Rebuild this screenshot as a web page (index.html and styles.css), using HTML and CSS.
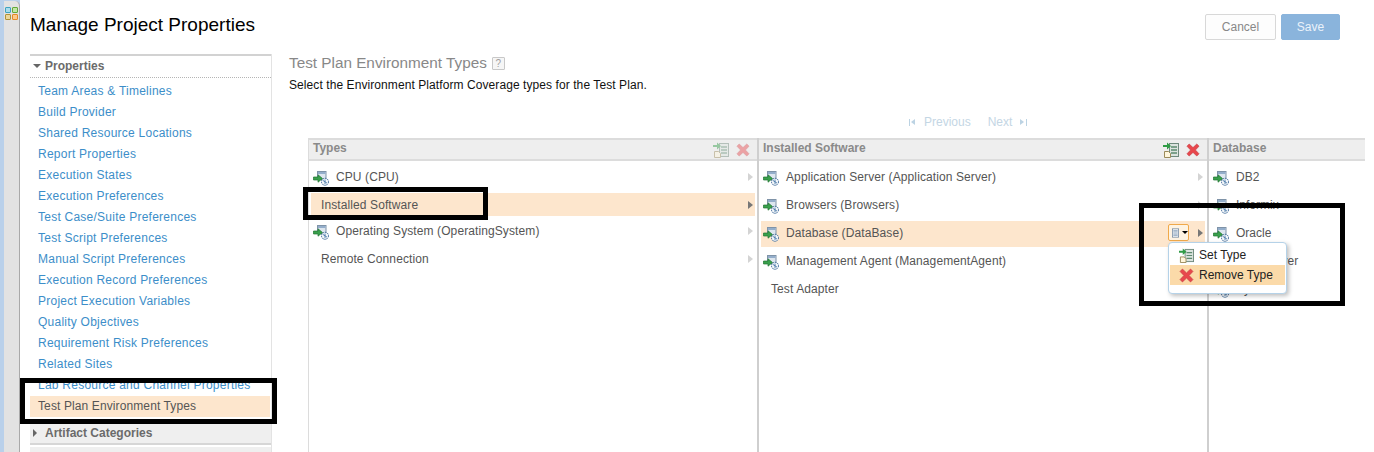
FILE: index.html
```html
<!DOCTYPE html>
<html lang="en">
<head>
<meta charset="utf-8">
<title>Manage Project Properties</title>
<link rel="stylesheet" href="styles.css">
</head>
<body>
<svg class="defs" aria-hidden="true">
  <symbol id="i-type" viewBox="0 0 16 16">
    <rect x="4.500" y="1.500" width="8.500" height="8" fill="#dde6ef" stroke="#7f93a8"/>
    <rect x="5" y="2" width="7.500" height="2" fill="#94aecb"/>
    <path d="M.5 7h4.500V4.800L9.500 8.500 5 12.200V10H.5z" fill="#39a04c" stroke="#1f7431" stroke-width=".7"/>
    <circle cx="12" cy="11.800" r="3.500" fill="#f4f7fa" stroke="#2a5a8e" stroke-dasharray="1.500 .8"/>
    <path d="M10 10.500l4 2.600M12 9.500v4.500" stroke="#4a79a8" stroke-width=".9" fill="none"/>
  </symbol>
  <symbol id="i-add" viewBox="0 0 16 16">
    <rect x="6.500" y="1.500" width="9" height="13" fill="#dbe3df" stroke="#6f8a7d"/>
    <path d="M8 5h6M8 8h6M8 11h6" stroke="#5e8a70" stroke-width="1.300"/>
    <path d="M0 3h4V0.500L8 4 4 7.500V5H0z" fill="#2f9b45"/>
    <path d="M1.500 9.500h4l2 2v4h-6z" fill="#fff6dc" stroke="#9b8a5a"/>
  </symbol>
  <symbol id="i-del" viewBox="0 0 14 14">
    <path d="M1 3.200L3.200 1 7 4.600 10.800 1 13 3.200 9.400 7 13 10.800 10.800 13 7 9.400 3.200 13 1 10.800 4.600 7z" fill="#e8474c" stroke="#c84048" stroke-width=".7" stroke-linejoin="round"/>
  </symbol>
  <symbol id="i-list" viewBox="0 0 11 14">
    <rect x=".5" y=".5" width="10" height="13" fill="#fff" stroke="#54708f"/>
    <path d="M2 3h7M2 5h7M2 7h7M2 9h7M2 11h7" stroke="#6a88a8"/>
  </symbol>
</svg>

<div class="app">
  <div class="rail">
    <div class="rail-panel">
      <div class="switcher">
        <span class="sq sq-a"></span><span class="sq sq-b"></span>
        <span class="sq sq-c"></span><span class="sq sq-d"></span>
      </div>
    </div>
  </div>

  <div class="main">
    <header class="top">
      <h1 class="title">Manage Project Properties</h1>
      <div class="actions">
        <button class="btn btn-cancel" type="button">Cancel</button>
        <button class="btn btn-save" type="button">Save</button>
      </div>
    </header>

    <div class="body">
      <nav class="side">
        <div class="side-head"><span class="tri-down"></span>Properties</div>
        <ul class="side-list">
          <li class="side-item">Team Areas &amp; Timelines</li>
          <li class="side-item">Build Provider</li>
          <li class="side-item">Shared Resource Locations</li>
          <li class="side-item">Report Properties</li>
          <li class="side-item">Execution States</li>
          <li class="side-item">Execution Preferences</li>
          <li class="side-item">Test Case/Suite Preferences</li>
          <li class="side-item">Test Script Preferences</li>
          <li class="side-item">Manual Script Preferences</li>
          <li class="side-item">Execution Record Preferences</li>
          <li class="side-item">Project Execution Variables</li>
          <li class="side-item">Quality Objectives</li>
          <li class="side-item">Requirement Risk Preferences</li>
          <li class="side-item">Related Sites</li>
          <li class="side-item">Lab Resource and Channel Properties</li>
          <li class="side-item is-selected">Test Plan Environment Types</li>
        </ul>
        <div class="side-foot"><span class="tri-right"></span>Artifact Categories</div>
        <div class="side-foot-next"></div>
      </nav>

      <section class="content">
        <h2 class="heading">Test Plan Environment Types <span class="help">?</span></h2>
        <p class="desc">Select the Environment Platform Coverage types for the Test Plan.</p>

        <div class="pager">
          <span class="pg-first"></span><span class="pg-label">Previous</span>
          <span class="pg-label pg-next">Next</span><span class="pg-last"></span>
        </div>

        <div class="cols">
          <div class="col col-types">
            <div class="col-head">
              <span class="col-title">Types</span>
              <svg class="hd-add is-off"><use href="#i-add"/></svg>
              <svg class="hd-del is-off"><use href="#i-del"/></svg>
            </div>
            <div class="rows">
              <div class="row"><svg class="ic"><use href="#i-type"/></svg><span class="lbl">CPU (CPU)</span><span class="arrow"></span></div>
              <div class="row no-ic is-selected"><span class="lbl">Installed Software</span><span class="arrow"></span></div>
              <div class="row"><svg class="ic"><use href="#i-type"/></svg><span class="lbl">Operating System (OperatingSystem)</span><span class="arrow"></span></div>
              <div class="row no-ic"><span class="lbl">Remote Connection</span><span class="arrow"></span></div>
            </div>
          </div>

          <div class="col col-soft">
            <div class="col-head">
              <span class="col-title">Installed Software</span>
              <svg class="hd-add"><use href="#i-add"/></svg>
              <svg class="hd-del"><use href="#i-del"/></svg>
            </div>
            <div class="rows">
              <div class="row"><svg class="ic"><use href="#i-type"/></svg><span class="lbl">Application Server (Application Server)</span><span class="arrow"></span></div>
              <div class="row"><svg class="ic"><use href="#i-type"/></svg><span class="lbl">Browsers (Browsers)</span><span class="arrow"></span></div>
              <div class="row is-selected">
                <svg class="ic"><use href="#i-type"/></svg><span class="lbl">Database (DataBase)</span>
                <div class="menu-wrap">
                  <div class="menu-btn"><svg class="list-ic"><use href="#i-list"/></svg><span class="caret"></span></div>
                  <div class="menu">
                    <div class="menu-item"><svg class="menu-ic"><use href="#i-add"/></svg>Set Type</div>
                    <div class="menu-item is-hot"><svg class="menu-ic"><use href="#i-del"/></svg>Remove Type</div>
                  </div>
                </div>
                <span class="arrow"></span>
              </div>
              <div class="row"><svg class="ic"><use href="#i-type"/></svg><span class="lbl">Management Agent (ManagementAgent)</span><span class="arrow"></span></div>
              <div class="row no-ic"><span class="lbl">Test Adapter</span><span class="arrow"></span></div>
            </div>
          </div>

          <div class="col col-db">
            <div class="col-head"><span class="col-title">Database</span></div>
            <div class="rows">
              <div class="row"><svg class="ic"><use href="#i-type"/></svg><span class="lbl">DB2</span></div>
              <div class="row"><svg class="ic"><use href="#i-type"/></svg><span class="lbl">Informix</span></div>
              <div class="row"><svg class="ic"><use href="#i-type"/></svg><span class="lbl">Oracle</span></div>
              <div class="row"><svg class="ic"><use href="#i-type"/></svg><span class="lbl">SQL Server</span></div>
              <div class="row"><svg class="ic"><use href="#i-type"/></svg><span class="lbl">Sybase</span></div>
            </div>
          </div>
        </div>
      </section>
    </div>
  </div>

  <div class="mark mark-side"></div>
  <div class="mark mark-row"></div>
  <div class="mark mark-menu"></div>
</div>
</body>
</html>
```
FILE: styles.css
```css
* { box-sizing: border-box; }
html, body { margin: 0; padding: 0; }
body {
  width: 1374px;
  height: 452px;
  overflow: hidden;
  background: #fff;
  font-family: "Liberation Sans", Arial, sans-serif;
  font-size: 12px;
  color: #555;
}
.defs { position: absolute; width: 0; height: 0; }

.app { position: relative; display: flex; height: 452px; overflow: hidden; }

/* left rail */
.rail { width: 20px; flex: none; background: #b9d0ea; padding: 1px 0 0 4px; }
.rail-panel {
  height: 100%;
  background: #e2e2e2;
  border-right: 1px solid #a9a9a9;
  border-top-right-radius: 5px;
  padding: 6px 0 0 1px;
}
.switcher { display: grid; grid-template-columns: 6px 6px; gap: 1px; }
.sq { height: 6px; border: 1px solid; border-radius: 1px; }
.sq-a { background: #a9dcec; border-color: #3ea3c0; }
.sq-b { background: #c2e6a6; border-color: #62a838; }
.sq-c { background: #ecd79c; border-color: #b09237; }
.sq-d { background: #fbc98c; border-color: #e48a24; }

.main { flex: 1; min-width: 0; padding-left: 10px; }

/* top */
.top {
  display: flex;
  justify-content: space-between;
  padding: 13px 34px 0 0;
  height: 54px;
}
.title { margin: 0; font-size: 19px; font-weight: 400; color: #000; line-height: 24px; }
.actions { display: flex; gap: 5px; height: 26px; margin-top: 1px; }
.btn {
  font: 12px "Liberation Sans", Arial, sans-serif;
  border-radius: 2px;
  padding: 0;
  height: 26px;
}
.btn-cancel { width: 71px; background: #fdfdfd; border: 1px solid #d8d8d8; color: #888; }
.btn-save { width: 59px; background: #8ab4dc; border: 1px solid #8ab4dc; color: #eaf2fa; }

/* layout */
.body { display: flex; }

/* sidebar */
.side { width: 242px; flex: none; border-right: 1px solid #e3e3e3; height: 398px; }
.side-head {
  height: 24px;
  border-top: 2px solid #d2d2d2;
  border-bottom: 1px dotted #b5b5b5;
  font-weight: 700;
  color: #6b6b6b;
  display: flex;
  align-items: center;
  padding: 0 0 2px 3px;
}
.tri-down {
  width: 0; height: 0;
  border: 4px solid transparent;
  border-top: 4px solid #666;
  border-bottom: 0;
  margin-right: 4px;
}
.tri-right {
  width: 0; height: 0;
  border: 4px solid transparent;
  border-left: 4px solid #666;
  border-right: 0;
  margin-right: 8px;
}
.side-list { list-style: none; margin: 3px 0 0; padding: 0; }
.side-item {
  height: 21px;
  line-height: 21px;
  padding-left: 8px;
  color: #3c8ec9;
  letter-spacing: .24px;
}
.side-item.is-selected { background: #fde6cd; color: #555; margin-right: 1px; letter-spacing: .11px; }
.side-foot {
  margin-top: 7px;
  height: 21px;
  background: #efefef;
  border-bottom: 2px solid #d6d6d6;
  font-weight: 700;
  color: #6b6b6b;
  display: flex;
  align-items: center;
  padding: 0 0 1px 3px;
}
.side-foot-next { height: 10px; margin-top: 2px; background: #efefef; }

/* content */
.content { flex: 1; min-width: 0; margin-left: 17px; }
.heading {
  margin: 0;
  font-size: 15.3px;
  font-weight: 400;
  color: #888;
  line-height: 18px;
  display: flex;
  align-items: center;
  gap: 5px;
}
.help {
  width: 13px;
  height: 13px;
  border: 1px solid #c8c8c8;
  border-radius: 1px;
  font-size: 10px;
  line-height: 11px;
  text-align: center;
  color: #a0a0a0;
  background: #f6f6f6;
}
.desc { margin: 3px 0 0; color: #111; line-height: 20px; letter-spacing: .08px; }

.pager {
  display: flex;
  align-items: center;
  height: 14px;
  margin: 20px 0 0 619px;
  color: #c4d6e4;
}
.pg-first, .pg-last { width: 7px; height: 7px; position: relative; flex: none; }
.pg-first { border-left: 1px solid #bcd3e3; margin: 0 8px 0 1px; }
.pg-first::after, .pg-last::after {
  content: "";
  display: block;
  border: 3.500px solid transparent;
  width: 0; height: 0;
}
.pg-first::after { border-right: 4px solid #bcd3e3; border-left: 0; margin-left: 1px; }
.pg-last { border-right: 1px solid #bcd3e3; margin-left: 8px; }
.pg-last::after { border-left: 4px solid #bcd3e3; border-right: 0; }
.pg-next { margin-left: 17px; }

/* columns */
.cols {
  display: grid;
  grid-template-columns: 449px 450px 158px;
  margin: 9px 0 0 19px;
  height: 320px;
}
.col { border-left: 2px solid #cfcfcf; min-width: 0; }
.col-types { border-left: 1px solid #dcdcdc; }
.col-head {
  height: 23px;
  border-top: 2px solid #dcdcdc;
  border-bottom: 2px solid #dcdcdc;
  background: #eee;
  display: flex;
  align-items: center;
  padding: 0 7px 0 4px;
  gap: 7px;
}
.col-title { flex: 1; font-weight: 700; color: #8a8a8a; padding-bottom: 4px; }
.hd-add { width: 16px; height: 16px; }
.hd-del { width: 14px; height: 14px; }
.is-off { opacity: .45; }

.rows { display: flex; flex-direction: column; gap: 3px; padding-top: 4px; }
.row {
  height: 25px;
  margin: 0 2px;
  padding: 0 2px 2px;
  display: flex;
  align-items: center;
  gap: 7px;
}
.row.no-ic { padding-left: 10px; }
.row.is-selected { background: #fde6cd; }
.col-types .row.is-selected { height: 23px; padding-bottom: 0; }
.col-soft .row.is-selected { height: 26px; margin-bottom: -1px; padding-bottom: 3px; }
.ic { width: 16px; height: 16px; flex: none; margin-top: 2px; }
.lbl { flex: 1; white-space: nowrap; letter-spacing: .1px; }
.col-db .lbl { letter-spacing: 0; }
.arrow {
  width: 0; height: 0;
  border: 4px solid transparent;
  border-left: 5px solid #d4d4d4;
  border-right: 0;
}
.is-selected > .arrow { border-left-color: #777; }
.col-db .row { margin-right: 0; }

/* dropdown */
.menu-wrap { position: relative; margin-right: 2px; }
.menu-btn {
  width: 21px;
  height: 17px;
  border: 1px solid #f0a94a;
  border-radius: 2px;
  background: #fef3e2;
  display: flex;
  align-items: center;
  padding-left: 3px;
  gap: 3px;
}
.list-ic { width: 11px; height: 14px; }
.caret {
  width: 0; height: 0;
  border: 3px solid transparent;
  border-top: 3px solid #000;
  border-bottom: 0;
}
.menu {
  position: absolute;
  z-index: 2;
  left: 0;
  top: 18px;
  width: 119px;
  height: 52px;
  background: #fff;
  border: 1px solid #b5d2e8;
  border-radius: 4px;
  box-shadow: 2px 2px 4px rgba(0, 0, 0, .25);
  padding: 2px 1px;
  color: #222;
}
.menu-item {
  height: 20px;
  display: flex;
  align-items: center;
  gap: 5px;
  padding-left: 9px;
}
.menu-item.is-hot { background: #fbdaa9; }
.menu-ic { width: 15px; height: 15px; flex: none; }

/* annotation boxes */
.mark { position: absolute; border: 5px solid #000; z-index: 5; pointer-events: none; }
.mark-side { left: 20px; top: 378px; width: 257px; height: 46px; }
.mark-row { left: 303px; top: 187px; width: 185px; height: 33px; }
.mark-menu { left: 1139px; top: 203px; width: 206px; height: 103px; }
```
